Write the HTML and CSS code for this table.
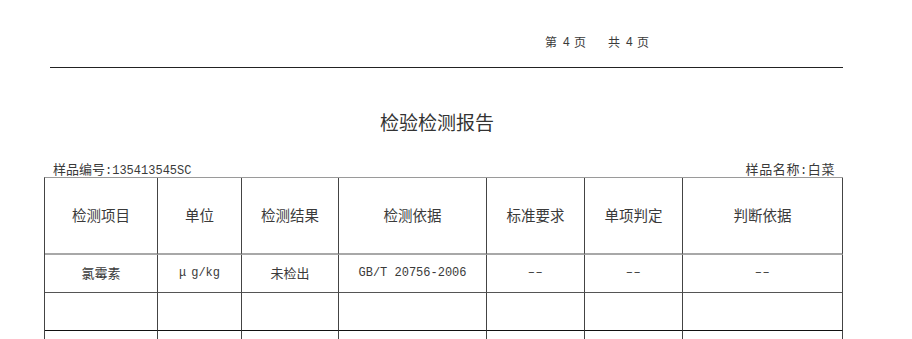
FILE: index.html
```html
<!DOCTYPE html>
<html lang="zh-CN">
<head>
<meta charset="utf-8">
<title>检验检测报告</title>
<link rel="stylesheet" href="styles.css">
</head>
<body>
<div class="page">
  <div class="pagenum">
    <span class="pn-cjk">第</span><span class="pn-num">4</span><span class="pn-cjk">页</span>
    <span class="pn-cjk pn-gap">共</span><span class="pn-num">4</span><span class="pn-cjk">页</span>
  </div>
  <div class="rule"></div>
  <h1 class="title">检验检测报告</h1>
  <div class="meta">
    <div class="meta-left">样品编号<span class="latin">:135413545SC</span></div>
    <div class="meta-right">样品名称<span class="latin">:</span>白菜</div>
  </div>
  <div class="grid">
    <div class="cell head">检测项目</div>
    <div class="cell head">单位</div>
    <div class="cell head">检测结果</div>
    <div class="cell head">检测依据</div>
    <div class="cell head">标准要求</div>
    <div class="cell head">单项判定</div>
    <div class="cell head">判断依据</div>

    <div class="cell data">氯霉素</div>
    <div class="cell data"><span class="latin"><span class="mu">μ</span>g/kg</span></div>
    <div class="cell data">未检出</div>
    <div class="cell data"><span class="latin">GB/T 20756-2006</span></div>
    <div class="cell data"><span class="latin dash">––</span></div>
    <div class="cell data"><span class="latin dash">––</span></div>
    <div class="cell data"><span class="latin dash">––</span></div>

    <div class="cell empty"></div>
    <div class="cell empty"></div>
    <div class="cell empty"></div>
    <div class="cell empty"></div>
    <div class="cell empty"></div>
    <div class="cell empty"></div>
    <div class="cell empty"></div>

    <div class="cell last"></div>
    <div class="cell last"></div>
    <div class="cell last"></div>
    <div class="cell last"></div>
    <div class="cell last"></div>
    <div class="cell last"></div>
    <div class="cell last"></div>
  </div>
</div>
</body>
</html>
```

FILE: styles.css
```css
html, body {
  margin: 0;
  padding: 0;
  background: #ffffff;
}
body {
  width: 912px;
  height: 339px;
  overflow: hidden;
  font-family: "Noto Sans CJK SC", "Noto Sans", sans-serif;
  color: #3a3a3a;
}
.page {
  width: 912px;
}
.pagenum {
  display: flex;
  align-items: center;
  padding-top: 34px;
  padding-left: 545px;
  height: 16px;
  font-size: 12px;
  line-height: 16px;
}
.pn-cjk {
  width: 12px;
}
.pn-num {
  font-family: "Liberation Sans", sans-serif;
  font-size: 12px;
  margin-left: 6px;
  margin-right: 4px;
  width: 7px;
}
.pn-gap {
  margin-left: 22px;
}
.rule {
  margin-top: 17px;
  margin-left: 50px;
  width: 793px;
  height: 0;
  border-top: 1px solid #222;
}
.title {
  margin: 41px 0 0 44px;
  width: 786px;
  text-align: center;
  font-size: 19px;
  line-height: 26px;
  font-weight: normal;
  color: #333;
  padding-right: 12px;
}
.meta {
  margin-top: 27px;
  margin-left: 53px;
  width: 782px;
  display: flex;
  justify-content: space-between;
  font-size: 13px;
  line-height: 14px;
  height: 15px;
}
.latin {
  font-family: "Liberation Mono", monospace;
  font-size: 12px;
}
.meta-right {
  letter-spacing: 0.6px;
}
.grid {
  margin-left: 44px;
  width: 798px;
  display: grid;
  grid-template-columns: 113px 84px 97px 148px 98px 98px 160px;
  border-left: 1px solid #444;
  border-top: 1px solid #9a9a9a;
}
.cell {
  display: flex;
  align-items: center;
  justify-content: center;
  border-right: 1px solid #444;
  box-sizing: border-box;
}
.head {
  height: 77px;
  border-bottom: 2px solid #a8a8a8;
  font-size: 14.5px;
  padding-bottom: 2px;
}
.data {
  height: 38px;
  border-bottom: 1px solid #555;
  font-size: 13px;
  padding-bottom: 2px;
}
.empty {
  height: 38px;
  border-bottom: 1px solid #111;
}
.last {
  height: 38px;
}
.mu {
  margin-right: 5px;
}
.dash {
  letter-spacing: 0.5px;
}
```
